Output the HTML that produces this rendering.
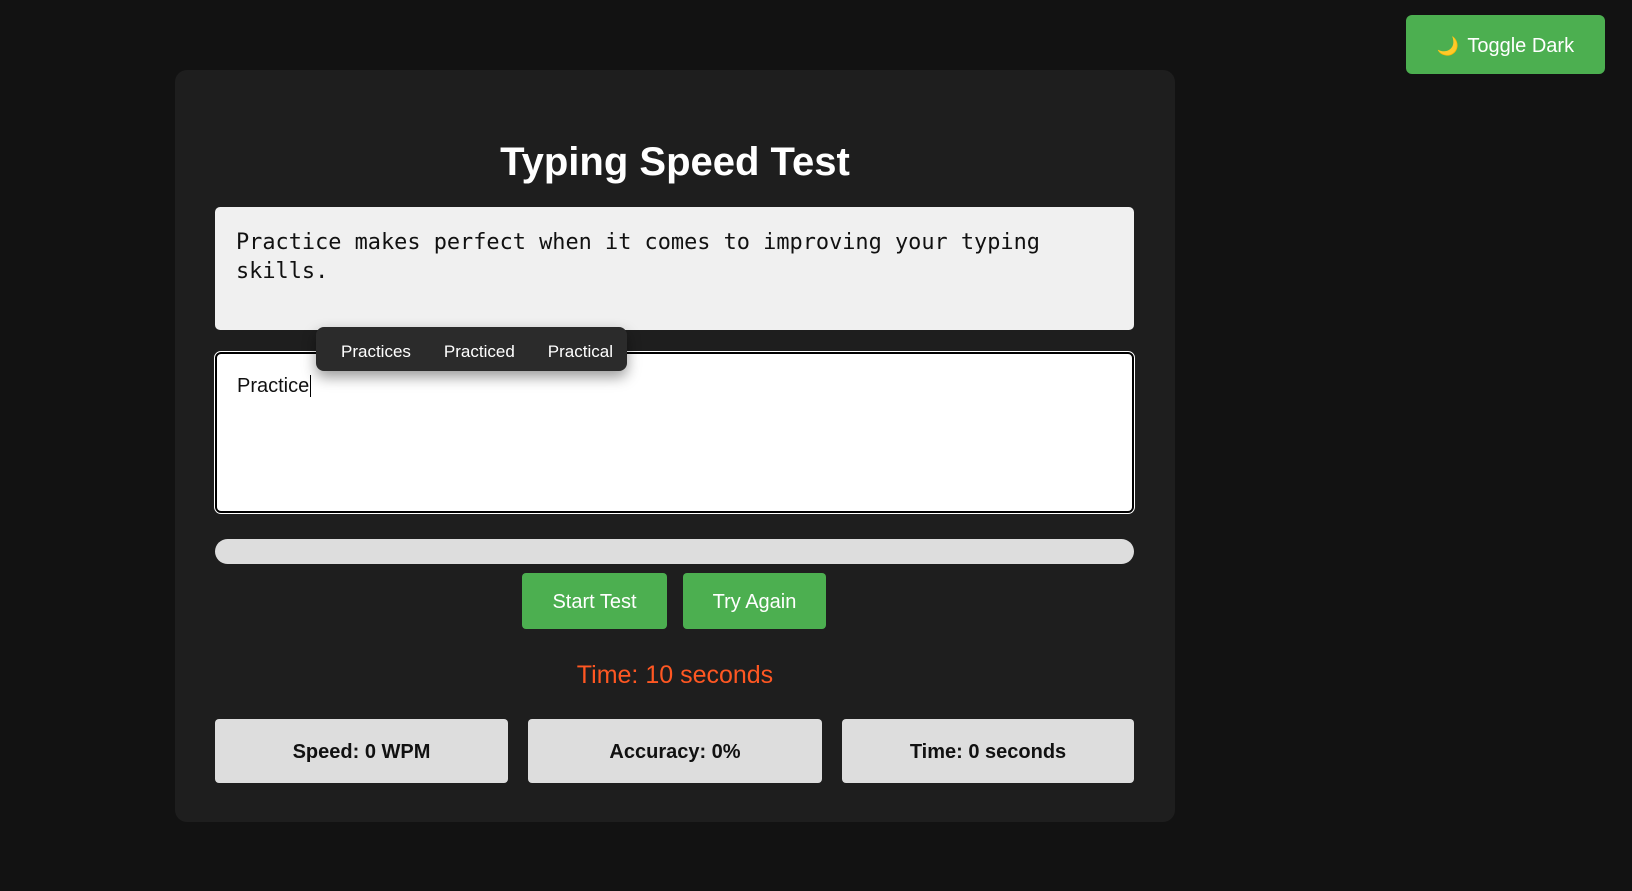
<!DOCTYPE html>
<html><head><style>
*{box-sizing:border-box;margin:0;padding:0}
body{width:1632px;height:891px;background:#121212;font-family:"Liberation Sans",sans-serif;position:relative;overflow:hidden}
.abs{position:absolute}
#toggle{left:1406px;top:15px;width:199px;height:59px;background:#4caf50;border-radius:6px;color:#fff;font-size:20px;display:flex;align-items:center;justify-content:center;padding-top:3px}
#card{left:175px;top:70px;width:1000px;height:752px;background:#1e1e1e;border-radius:12px}
h1{position:absolute;left:175px;width:1000px;top:140px;text-align:center;color:#fff;font-size:40px;font-weight:bold}
#quote{left:215px;top:207px;width:919px;height:123px;background:#f0f0f0;border-radius:5px;padding:21px 21px;font-family:"DejaVu Sans Mono","Liberation Mono",monospace;font-size:21.9px;line-height:29px;color:#111}
#ta{left:215px;top:352px;width:919px;height:161px;background:#fff;border:2px solid #000;outline:1px solid #fff;border-radius:6px;padding:21px 20px;font-size:20px;color:#111}
#pop{left:316px;top:327px;width:311px;height:44px;background:#2b2b2b;border-radius:8px;box-shadow:0 6px 14px rgba(0,0,0,.4);color:#fff;font-size:17px;display:flex;align-items:center;padding-left:25px;padding-top:5px;gap:33px}
#bar{left:215px;top:539px;width:919px;height:25px;background:#ddd;border-radius:13px}
.btn{top:573px;height:56px;background:#4caf50;border-radius:4px;color:#fff;font-size:20px;display:flex;align-items:center;justify-content:center;padding-top:2px}
#time{left:175px;width:1000px;top:661px;text-align:center;color:#ff5722;font-size:25px}
.st{top:719px;height:64px;background:#ddd;border-radius:4px;font-weight:bold;font-size:20px;color:#111;display:flex;align-items:center;justify-content:center;padding-top:2px}
</style></head><body>
<div id="toggle" class="abs"><span style="font-size:18px;margin-right:8px">🌙</span>Toggle Dark</div>
<div id="card" class="abs"></div>
<h1>Typing Speed Test</h1>
<div id="quote" class="abs">Practice makes perfect when it comes to improving your typing skills.</div>
<div id="ta" class="abs">Practice<span style="border-left:1px solid #000;margin-left:1px"></span></div>
<div id="pop" class="abs"><span>Practices</span><span>Practiced</span><span>Practical</span></div>
<div id="bar" class="abs"></div>
<div class="abs btn" style="left:522px;width:145px">Start Test</div>
<div class="abs btn" style="left:683px;width:143px">Try Again</div>
<div id="time" class="abs">Time: 10 seconds</div>
<div class="abs st" style="left:215px;width:293px">Speed: 0 WPM</div>
<div class="abs st" style="left:528px;width:294px">Accuracy: 0%</div>
<div class="abs st" style="left:842px;width:292px">Time: 0 seconds</div>
</body></html>
